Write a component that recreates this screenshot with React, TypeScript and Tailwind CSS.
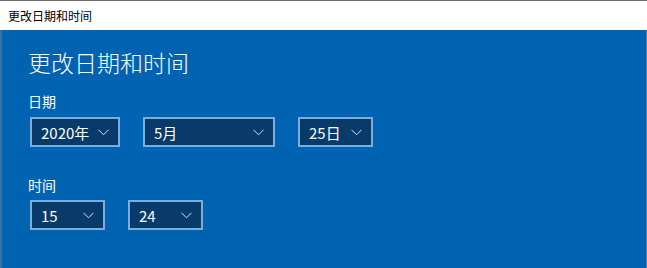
import React from 'react';

const font = { fontFamily: '"Noto Sans CJK SC", "Noto Sans", sans-serif' };

const Chevron = () => (
  <svg width="11" height="7" viewBox="0 0 11 7" fill="none" className="shrink-0">
    <path d="M0.5 0.8 L5.5 5.8 L10.5 0.8" stroke="#d6e6f5" strokeWidth="1" />
  </svg>
);

const Picker = ({ value, width }: { value: string; width: string }) => (
  <div
    className={`${width} h-[30px] flex items-center justify-between pl-[9px] pr-[9px] bg-[#083a6a] border-2 border-[#78aee2] text-white text-[15px] leading-none`}
  >
    <span>{value}</span>
    <Chevron />
  </div>
);

const App = () => {
  return (
    <div className="w-[647px] h-[268px] bg-[#0063b1] flex flex-col overflow-hidden" style={font}>
      {/* window title bar */}
      <div className="h-[30px] shrink-0 bg-white border-t border-[#6b6b6b] flex items-center pl-[8px] text-[12px] text-black">
        更改日期和时间
      </div>

      <div className="flex-1 border-l-2 border-l-[#3f6f9a] border-r border-r-[#4c7fb0] pl-[26px] pt-[16px]">
        <h1 className="text-[23px] leading-[32px] font-light text-white">更改日期和时间</h1>

        <div className="mt-[13px] text-[14px] leading-[20px] text-white">日期</div>
        <div className="mt-[6px] ml-[2px] flex gap-[23px]">
          <Picker value="2020年" width="w-[90px]" />
          <Picker value="5月" width="w-[132px]" />
          <Picker value="25日" width="w-[75px]" />
        </div>

        <div className="mt-[28px] text-[14px] leading-[20px] text-white">时间</div>
        <div className="mt-[5px] ml-[2px] flex gap-[23px]">
          <Picker value="15" width="w-[75px]" />
          <Picker value="24" width="w-[75px]" />
        </div>
      </div>
    </div>
  );
};

export default App;
